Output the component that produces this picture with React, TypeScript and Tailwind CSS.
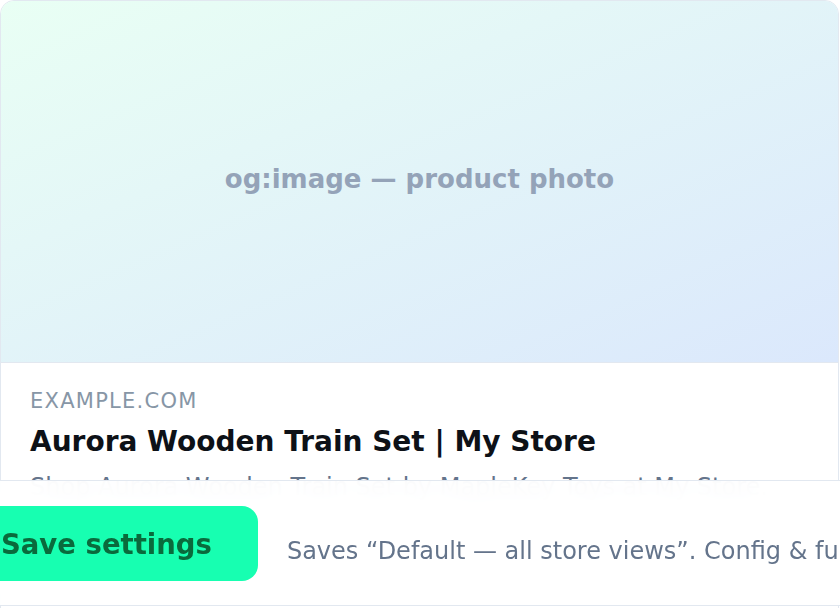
import React from "react";

export default function App() {
  return (
    <div
      className="relative w-[840px] h-[608px] overflow-hidden bg-white"
      style={{ fontFamily: '"DejaVu Sans", sans-serif' }}
    >
      <div className="w-[839px] h-[700px] rounded-t-[14px] border border-[#e2e8f0] overflow-hidden bg-white">
        <div className="h-[362px] pb-[6px] flex items-center justify-center bg-gradient-to-br from-[#e9fff4] to-[#dbe8fc] border-b border-[#e2e8f0]">
          <span className="text-[26px] font-bold text-[#94a3b8] leading-none">og:image — product photo</span>
        </div>
        <div className="px-[29px] pt-[24px]">
          <div className="text-[21px] leading-[28px] tracking-[0.06em] text-[#8796a6]">EXAMPLE.COM</div>
          <div className="mt-[10px] text-[28px] leading-[34px] font-bold text-[#0d1117]">
            Aurora Wooden Train Set | My Store
          </div>
          <div className="mt-[13px] text-[24px] leading-[30px] text-[#64748b] whitespace-nowrap">
            Shop Aurora Wooden Train Set by MapleKey Toys at My Store.
          </div>
        </div>
      </div>
      <div className="absolute left-[-43px] right-[-40px] top-[480px] h-[126px] flex items-center gap-[29px] rounded-[16px] border-y border-[#e2e8f0] bg-white/95 backdrop-blur-md">
        <button className="h-[75px] pt-[3px] pl-[44px] pr-[46px] rounded-[16px] bg-[#17ffb1] text-[27.5px] font-bold text-[#0a6a3c] whitespace-nowrap">
          Save settings
        </button>
        <span className="pt-[15px] text-[24px] text-[#64748b] whitespace-nowrap">
          Saves “Default — all store views”. Config &amp; fu
        </span>
      </div>
    </div>
  );
}
